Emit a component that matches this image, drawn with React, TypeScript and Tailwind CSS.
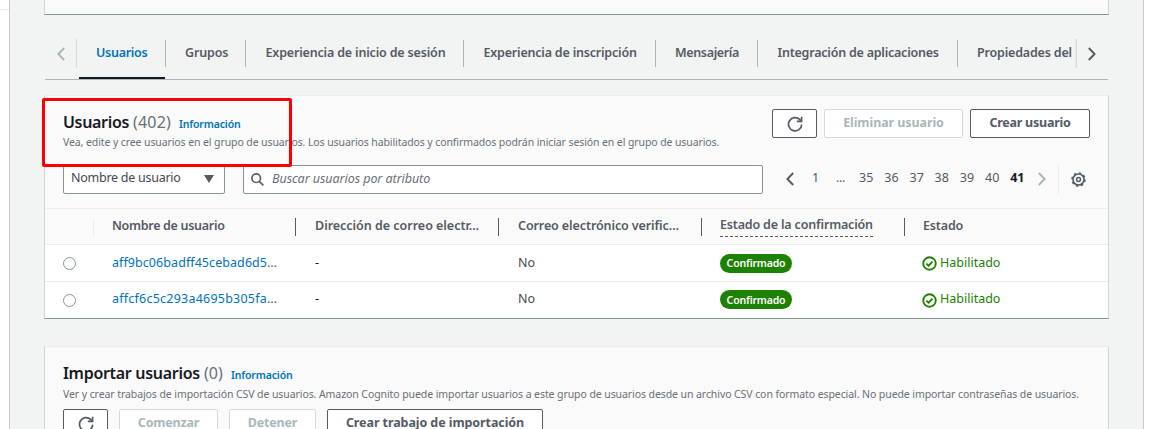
import type { ReactNode } from 'react';

const Chevron = ({ dir, className }: { dir: 'left' | 'right'; className: string }) => (
  <svg viewBox="0 0 8 14" width="8" height="14" fill="none" stroke="currentColor" strokeWidth="1.9" className={className}>
    <path d={dir === 'left' ? 'M7.2 1 1.4 7l5.8 6' : 'M.8 1l5.8 6L.8 13'} />
  </svg>
);

const Refresh = () => (
  <svg viewBox="0 0 16 16" width="16" height="16" fill="none" stroke="#545b64" strokeWidth="1.7">
    <path d="M14.700 8.600a6.600 6.600 0 1 1-2.100-5.200l1.600 1.600" />
    <path d="M14.600.700V5.400H9.800" />
  </svg>
);

const Gear = () => (
  <svg viewBox="0 0 16 16" width="15" height="15" fill="none" stroke="#545b64">
    <circle cx="8" cy="8" r="5.900" strokeWidth="1.700" />
    <circle cx="8" cy="8" r="7" strokeWidth="1.400" strokeDasharray="2.75 2.75" />
    <circle cx="8" cy="8" r="2.100" strokeWidth="1.600" />
  </svg>
);

const Check = () => (
  <svg viewBox="0 0 16 16" width="15" height="15" fill="none" stroke="#1d8102" strokeWidth="2" className="mt-px">
    <circle cx="8" cy="8" r="6.700" />
    <path d="M4.700 8.200l2.300 2.200 4.200-4.300" />
  </svg>
);

function Button({ children, className, disabled }: { children: ReactNode; className: string; disabled?: boolean }) {
  return (
    <button
      className={`flex h-[29px] shrink-0 items-center justify-center rounded-[2px] border bg-white text-[12.5px] leading-[18px] ${
        disabled ? 'border-[#d5dbdb] font-bold text-[#aab7b8]' : 'border-[#545b64] font-bold text-[#545b64]'
      } ${className}`}
    >
      {children}
    </button>
  );
}

const tabs = [
  { label: 'Usuarios', cls: 'w-[87px] pl-[17px] tracking-[-0.28px]' },
  { label: 'Grupos', cls: 'w-[80px] pl-[19px] tracking-[-0.15px]' },
  { label: 'Experiencia de inicio de sesión', cls: 'w-[218px] pl-[19.5px] tracking-[-0.17px]' },
  { label: 'Experiencia de inscripción', cls: 'w-[192px] pl-[19.5px] tracking-[-0.2px]' },
  { label: 'Mensajería', cls: 'w-[102px] pl-[19px] tracking-[-0.35px]' },
  { label: 'Integración de aplicaciones', cls: 'w-[200px] pl-[19.5px] tracking-[-0.22px]' },
];

const columns = [
  { label: 'Nombre de usuario', cls: 'w-[202px] pl-[18px] tracking-[-0.3px]' },
  { label: 'Dirección de correo electr…', cls: 'w-[203px] pl-[19px] tracking-[-0.02px]' },
  { label: 'Correo electrónico verific…', cls: 'w-[203px] pl-[19px] tracking-[-0.1px]' },
];

const rows = [
  { id: 'aff9bc06badff45cebad6d5', cls: 'h-[37px] border-b border-[#eaeded]', idCls: 'tracking-[0.07px]' },
  { id: 'affcf6c5c293a4695b305fa', cls: 'h-[36px] pb-px', idCls: 'tracking-[0.23px]' },
];

const pages = ['35', '36', '37', '38', '39', '40'];

export default function App() {
  return (
    <div className="relative flex h-[429px] w-[1154px] overflow-hidden bg-white font-['Noto_Sans',sans-serif] text-[12.5px] leading-[18px] text-[#545b64]">
      <div className="h-[10px] w-[9px] shrink-0 border-b border-[#eaeded]" />
      <main className="flex w-[1135px] shrink-0 flex-col border-x border-[#c8cccc] bg-[#f2f3f3] pl-[34px]">
        <section className="h-[15px] w-[1065px] shrink-0 border-x border-b border-x-[#d0d6d6] border-b-[#879596] bg-[#fafafa]" />

        <nav className="ml-px mt-[24px] flex h-[41px] w-[1063px] shrink-0 border-b border-[#aab7b8]">
          <div className="flex h-[29px] w-[32px] shrink-0 items-center justify-center border-r border-[#d5dbdb]">
            <Chevron dir="left" className="mt-px text-[#aab7b8]" />
          </div>
          <div className="ml-[2px] flex w-[997px] overflow-hidden font-semibold whitespace-nowrap">
            {tabs.map((t, i) => (
              <div
                key={t.label}
                className={`flex shrink-0 flex-col pt-px ${t.cls} ${i === 0 ? 'relative text-[#0073bb]' : ''}`}
              >
                <div className="flex h-[27px] items-center border-r border-[#aab7b8] pb-[2px]">{t.label}</div>
                {i === 0 && <div className="absolute bottom-0 left-0 h-[2px] w-[86px] bg-[#16191f]" />}
              </div>
            ))}
            <div className="flex h-[28px] items-center pl-[19px] pb-px tracking-[-0.18px]">Propiedades del</div>
          </div>
          <div className="flex h-[29px] w-[32px] shrink-0 items-center justify-center border-l border-[#d5dbdb] pr-px shadow-[-1px_0_1px_rgba(0,0,0,0.03)]">
            <Chevron dir="right" className="mt-px" />
          </div>
        </nav>

        <section className="mt-[15px] flex h-[224px] w-[1065px] shrink-0 flex-col border border-[#d0d6d6] border-t-[#eaeded] border-b-[#879596] bg-[#fafafa]">
          <div className="flex h-[69px] shrink-0 pl-[18px]">
            <div className="w-[709px] pt-[15px] whitespace-nowrap">
              <div className="flex h-[22px] items-baseline text-[16px] leading-[22px]">
                <h2 className="w-[70px] font-semibold tracking-[-0.33px] text-[#16191f]">Usuarios</h2>
                <span className="w-[46px] tracking-[0.2px] text-[#687078]">(402)</span>
                <a className="text-[10.5px] font-semibold tracking-[-0.15px] text-[#0073bb]">Información</a>
              </div>
              <p className="pt-px text-[10.5px] leading-[16px] tracking-[-0.1px] text-[#687078]">
                Vea, edite y cree usuarios en el grupo de usuarios. Los usuarios habilitados y confirmados podrán iniciar
                sesión en el grupo de usuarios.
              </p>
            </div>
            <div className="flex pt-[13px]">
              <Button className="w-[45px]"><Refresh /></Button>
              <Button disabled className="ml-[7px] w-[139px] pb-[2px] tracking-[-0.08px]">Eliminar usuario</Button>
              <Button className="ml-[7px] w-[120px] pb-[2px] tracking-[-0.25px]">Crear usuario</Button>
            </div>
          </div>

          <div className="flex h-[43px] shrink-0 pl-[18px]">
            <div className="flex h-[29px] w-[162px] items-center justify-between rounded-[2px] border border-[#879596] bg-white pr-[10px] pl-[7px] text-[#434950]">
              <span className="pb-[3px] tracking-[-0.26px]">Nombre de usuario</span>
              <svg viewBox="0 0 10 8" width="10" height="8" fill="#545b64" className="mb-[2px]"><path d="M0 0h10L5 8z" /></svg>
            </div>
            <div className="ml-[18px] flex h-[29px] w-[520px] items-center rounded-[2px] border border-[#879596] bg-white pl-[7px]">
              <svg viewBox="0 0 14 14" width="13" height="13" fill="none" stroke="#545b64" strokeWidth="1.8" className="mb-px">
                <circle cx="5.600" cy="5.600" r="4.600" />
                <path d="M9 9l4.300 4.300" />
              </svg>
              <span className="ml-[8px] pb-px tracking-[-0.05px] text-[#687078] italic">Buscar usuarios por atributo</span>
            </div>
            <div className="ml-[23px] flex h-[29px] items-center">
              <Chevron dir="left" className="mb-px" />
              <span className="ml-[15px] w-[20px] pl-[3px] pb-[3px]">1</span>
              <span className="ml-[7px] w-[23px] pb-[3px] tracking-[-0.3px]">...</span>
              {pages.map((p) => (
                <span key={p} className="w-[25.2px] pb-[3px] tracking-[0.1px]">{p}</span>
              ))}
              <span className="w-[28px] pb-[3px] font-bold text-[#16191f]">41</span>
              <Chevron dir="right" className="mb-px text-[#aab7b8]" />
            </div>
            <div className="ml-[12px] flex h-[29px] items-center border-l border-[#eaeded] pb-px pl-[12px]">
              <Gear />
            </div>
          </div>

          <div className="flex h-[37px] shrink-0 border-y border-[#eaeded] font-semibold whitespace-nowrap">
            <div className="mt-[9px] h-[18px] w-[49px] border-r border-[#eaeded]" />
            {columns.map((c) => (
              <div key={c.label} className={`mt-[9px] h-[18px] shrink-0 border-r border-[#545b64] leading-[15px] ${c.cls}`}>
                {c.label}
              </div>
            ))}
            <div className="mt-[9px] h-[18px] w-[203px] shrink-0 border-r border-[#545b64] pl-[18px] tracking-[-0.17px]">
              <span className="flex h-[19px] w-[153px] border-b border-dashed border-[#545b64] leading-[14px]">
                Estado de la confirmación
              </span>
            </div>
            <div className="mt-[9px] pl-[18px] leading-[15px] tracking-[-0.15px]">Estado</div>
          </div>

          {rows.map((r) => (
            <div key={r.id} className={`flex shrink-0 items-center bg-white ${r.cls}`}>
              <div className="mt-px ml-[18px] h-[13px] w-[13px] rounded-full border border-[#879596] bg-white" />
              <div className={`ml-[36px] w-[203px] pb-px text-[#0073bb] ${r.idCls}`}>
                {r.id}<span className="text-[#545b64]">…</span>
              </div>
              <div className="w-[203px] pb-px text-[#16191f]">-</div>
              <div className="w-[202px] pb-px text-[#434950]">No</div>
              <div className="w-[202px]">
                <span className="flex h-[19px] w-[72px] items-center justify-center rounded-full bg-[#1d8102] text-[10.5px] font-semibold tracking-[-0.18px] text-white">
                  Confirmado
                </span>
              </div>
              <div className="flex items-center gap-[3px] text-[#1d8102]">
                <Check />
                <span className="pb-px">Habilitado</span>
              </div>
            </div>
          ))}
        </section>

        <section className="mt-[27px] h-[100px] w-[1065px] shrink-0 border border-[#d0d6d6] border-t-[#eaeded] bg-[#fafafa] pt-[15px] pl-[18px] whitespace-nowrap">
          <div className="flex h-[22px] items-baseline text-[16px] leading-[22px]">
            <h2 className="w-[141px] font-semibold tracking-[-0.3px] text-[#16191f]">Importar usuarios</h2>
            <span className="w-[27px] text-[#687078]">(0)</span>
            <a className="text-[10.5px] font-semibold tracking-[-0.15px] text-[#0073bb]">Información</a>
          </div>
          <p className="pt-[2px] text-[10.5px] leading-[16px] tracking-[-0.083px] text-[#687078]">
            Ver y crear trabajos de importación CSV de usuarios. Amazon Cognito puede importar usuarios a este grupo de
            usuarios desde un archivo CSV con formato especial. No puede importar contraseñas de usuarios.
          </p>
          <div className="mt-[7px] flex">
            <Button className="w-[45px]"><Refresh /></Button>
            <Button disabled className="ml-[11px] w-[99px] pb-[2px] tracking-[-0.2px]">Comenzar</Button>
            <Button disabled className="ml-[11px] w-[87px] pb-[2px] tracking-[-0.2px]">Detener</Button>
            <Button className="ml-[11px] w-[216px] pb-[2px] tracking-[-0.08px]">Crear trabajo de importación</Button>
          </div>
        </section>
      </main>
      <div className="pointer-events-none absolute top-[98px] left-[42px] h-[69px] w-[250px] rounded-[2px] border-[3px] border-[#ff0000]" />
    </div>
  );
}
